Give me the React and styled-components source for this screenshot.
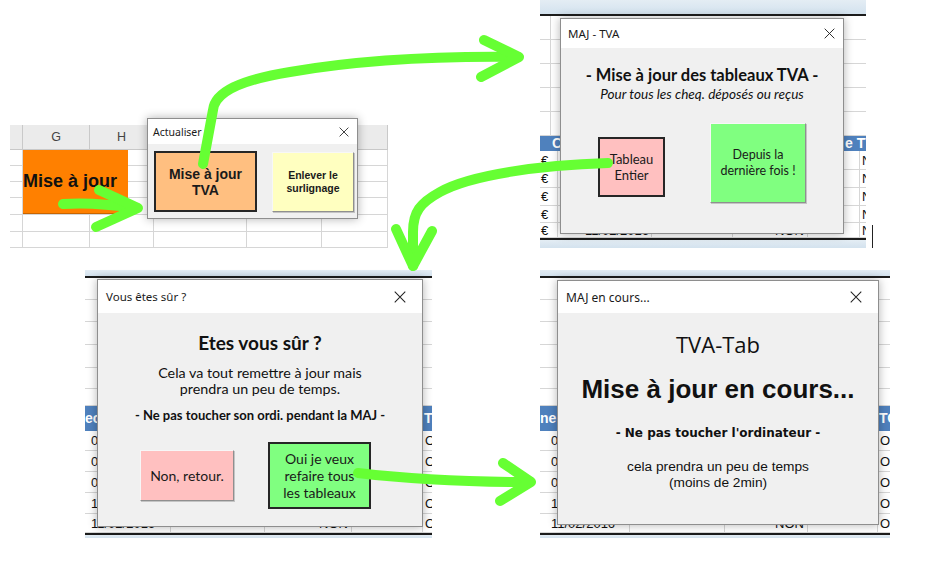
import React from 'react'
import styled, { createGlobalStyle, css } from 'styled-components'

const GlobalStyle = createGlobalStyle`
  html, body {
    margin: 0;
    padding: 0;
    background: #fff;
  }
  body {
    font-family: 'Liberation Sans', Arial, sans-serif;
  }
`

const ARROW = '#66ff33'

// Page
const Canvas = styled.div`
  position: relative;
  width: 934px;
  height: 580px;
  overflow: hidden;
  background: #fff;
`

// One screenshot placed on the canvas
const Scene = styled.div`
  position: absolute;
  left: ${(p) => p.$x}px;
  top: ${(p) => p.$y}px;
  width: ${(p) => p.$w}px;
  height: ${(p) => p.$h}px;
`

// Excel sheet behind the dialogs
const Sheet = styled.div`
  display: flex;
  flex-direction: column;
  width: 100%;
  height: 100%;
  overflow: hidden;
  background: #fff;
  font-family: 'Liberation Sans', Arial, sans-serif;
  font-size: 13px;
  color: #111;
`

const Strip = styled.div`
  flex: none;
  height: ${(p) => p.$h}px;
  background: linear-gradient(#e4edf4, #d3e2ee);
  box-sizing: border-box;
  ${(p) =>
    p.$edge === 'top'
      ? css`border-bottom: 2px solid #1c1c1c;`
      : css`border-top: 2px solid #1c1c1c;`}
`

const HeadBand = styled.div`
  flex: none;
  display: flex;
  height: 25px;
  background: #ebebeb;
  border-bottom: 1px solid #c8c8c8;
  box-sizing: border-box;
`

const ColHead = styled.div`
  flex: none;
  width: ${(p) => p.$w}px;
  display: flex;
  align-items: center;
  justify-content: center;
  border-right: 1px solid #c9c9c9;
  box-sizing: border-box;
  font-size: 12.5px;
  color: #444;
`

const Row = styled.div`
  flex: none;
  display: flex;
  height: ${(p) => p.$h}px;
  box-sizing: border-box;
  background: ${(p) => (p.$head ? '#4f81bd' : 'transparent')};
  color: ${(p) => (p.$head ? '#fff' : '#111')};
  font-weight: ${(p) => (p.$head ? 700 : 400)};
  font-size: ${(p) => (p.$head ? 14 : 13)}px;
  border-bottom: 1px solid ${(p) => (p.$head ? '#4f81bd' : '#d6d6d6')};
`

const Cell = styled.div`
  flex: none;
  width: ${(p) => p.$w}px;
  box-sizing: border-box;
  padding: 0 ${(p) => p.$pad ?? 3}px;
  display: flex;
  align-items: center;
  justify-content: ${(p) =>
    p.$align === 'right' ? 'flex-end' : p.$align === 'center' ? 'center' : 'flex-start'};
  border-right: 1px solid ${(p) => (p.$head ? 'transparent' : '#d6d6d6')};
  white-space: nowrap;
  overflow: hidden;
`

// Shape button drawn on the sheet (top-left screenshot)
const ShapeButton = styled.div`
  position: absolute;
  left: 13px;
  top: 25px;
  width: 105px;
  height: 64px;
  display: flex;
  align-items: center;
  background: #ff8000;
  border-bottom: 1px solid #c96500;
  box-sizing: border-box;
  font-family: 'Liberation Sans', Arial, sans-serif;
  font-weight: 700;
  font-size: 18px;
  color: #111;
  white-space: nowrap;
  overflow: hidden;
`

// Windows dialog
const Dialog = styled.div`
  position: absolute;
  left: ${(p) => p.$x}px;
  top: ${(p) => p.$y}px;
  width: ${(p) => p.$w}px;
  height: ${(p) => p.$h}px;
  z-index: 2;
  display: flex;
  flex-direction: column;
  box-sizing: border-box;
  background: #f0f0f0;
  border: 1px solid #8e8e8e;
  box-shadow: 0 0 9px rgba(0, 0, 0, 0.3);
`

const TitleBar = styled.div`
  flex: none;
  height: ${(p) => p.$h}px;
  display: flex;
  align-items: center;
  justify-content: space-between;
  padding: 0 ${(p) => p.$pr}px 0 ${(p) => p.$pl}px;
  background: #fff;
  font-family: 'Noto Sans', 'Open Sans', sans-serif;
  font-size: ${(p) => p.$size}px;
  color: #1a1a1a;
`

const Body = styled.div`
  flex: 1;
  display: flex;
  flex-direction: column;
  align-items: center;
  padding-top: ${(p) => p.$pt || 0}px;
  font-family: Lato, 'Open Sans', sans-serif;
  color: #111;
`

const Line = styled.div`
  font-family: ${(p) => p.$font || "Lato, 'Open Sans', sans-serif"};
  font-size: ${(p) => p.$size}px;
  font-weight: ${(p) => (p.$bold ? 700 : 400)};
  font-style: ${(p) => (p.$italic ? 'italic' : 'normal')};
  line-height: ${(p) => p.$lh}px;
  margin-top: ${(p) => p.$mt || 0}px;
  text-align: center;
  white-space: pre-line;
`

const ButtonRow = styled.div`
  align-self: stretch;
  display: flex;
  align-items: ${(p) => p.$align || 'center'};
  justify-content: ${(p) => p.$justify || 'center'};
  gap: ${(p) => p.$gap}px;
  margin-top: ${(p) => p.$mt || 0}px;
  padding-left: ${(p) => p.$pl || 0}px;
`

const XlButton = styled.div`
  flex: none;
  box-sizing: border-box;
  width: ${(p) => p.$w}px;
  height: ${(p) => p.$h}px;
  margin-top: ${(p) => p.$mt || 0}px;
  display: flex;
  align-items: center;
  justify-content: center;
  text-align: center;
  white-space: pre-line;
  background: ${(p) => p.$bg};
  font-family: ${(p) => p.$font || "Lato, 'Open Sans', sans-serif"};
  font-size: ${(p) => p.$size}px;
  font-weight: ${(p) => (p.$bold ? 700 : 400)};
  line-height: ${(p) => p.$lh}px;
  color: #1a1a1a;
  ${(p) =>
    p.$focus
      ? css`
          border: 2px solid #262626;
        `
      : css`
          border: 1px solid;
          border-color: #f7f7f7 #8f8f8f #8f8f8f #f7f7f7;
          box-shadow: 1px 1px 0 #c4c4c4;
        `}
`

const ArrowLayer = styled.svg`
  position: absolute;
  left: 0;
  top: 0;
  z-index: 5;
  pointer-events: none;
`

const CloseX = ({ size }) => (
  <svg width={size} height={size} viewBox="0 0 10 10">
    <path d="M0.6 0.6L9.4 9.4M9.4 0.6L0.6 9.4" stroke="#222" strokeWidth="0.85" fill="none" />
  </svg>
)

const SheetRow = ({ h, cells, head }) => (
  <Row $h={h} $head={head}>
    {cells.map((c, i) => (
      <Cell key={i} $w={c.w} $align={c.align} $pad={c.pad} $head={head}>
        {c.t}
      </Cell>
    ))}
  </Row>
)

// Data
const colsA = [13, 67, 64, 93, 75, 66]
const rowsA = [16, 16, 16, 17, 17, 16]

const dates = ['05/01/2016', '08/01/2016', '09/01/2016', '10/02/2016', '11/02/2016']
const heightsB = [19, 18, 18, 17, 15]

const whiteC = [22, 22, 23, 23, 21, 17]
const dataC = [20, 21, 21, 21, 19]

// only the last row peeks out below the dialogs
const rowB = (d, last) => [
  { w: 18, t: '€', pad: 1 },
  { w: 94, t: last ? d : '', align: 'right', pad: 2 },
  { w: 81 },
  { w: 75, t: last ? 'NON' : '', align: 'right' },
  { w: 52 },
  { w: 30, t: 'NON', pad: 2 },
]

const rowC = (d, last, pad, widths) => [
  { w: widths[0], t: d, pad },
  { w: widths[1] },
  { w: widths[2], t: last ? 'NON' : '', align: 'right' },
  { w: widths[3] },
  { w: 30, t: 'OUI', pad: 2 },
]

const SheetLower = ({ head, pad, widths }) => (
  <Sheet>
    <Strip $edge="top" $h={8} />
    {whiteC.map((h, i) => (
      <SheetRow key={'w' + i} h={h} cells={[{ w: 400 }]} />
    ))}
    <SheetRow
      head
      h={25}
      cells={[
        { w: widths[0] + widths[1] + widths[2] + widths[3], t: head, pad: 0 },
        { w: 30, t: 'TOTAL', pad: 1 },
      ]}
    />
    {dates.map((d, i) => (
      <SheetRow key={d} h={dataC[i]} cells={rowC(d, i === dates.length - 1, pad, widths)} />
    ))}
    <Strip $edge="bottom" $h={5} />
  </Sheet>
)

export default function App() {
  return (
    <>
      <GlobalStyle />
      <Canvas>
        {/* Top left: sheet with the update shape and the "Actualiser" form */}
        <Scene $x={10} $y={125} $w={378} $h={123}>
          <Sheet>
            <HeadBand>
              {colsA.map((w, i) => (
                <ColHead key={i} $w={w}>
                  {i === 1 ? 'G' : i === 2 ? 'H' : ''}
                </ColHead>
              ))}
            </HeadBand>
            {rowsA.map((h, i) => (
              <SheetRow key={i} h={h} cells={colsA.map((w) => ({ w }))} />
            ))}
          </Sheet>
          <ShapeButton>Mise à jour</ShapeButton>
          <Dialog $x={137} $y={-7} $w={211} $h={101}>
            <TitleBar $h={25} $pl={5} $pr={8} $size={10.5}>
              Actualiser
              <CloseX size={10} />
            </TitleBar>
            <Body>
              <ButtonRow $justify="flex-start" $pl={6} $gap={15} $mt={7}>
                <XlButton
                  $focus
                  $w={103}
                  $h={61}
                  $bg="#ffbf80"
                  $font="'Liberation Sans', Arial, sans-serif"
                  $bold
                  $size={14}
                  $lh={16}
                >
                  {'Mise à jour\nTVA'}
                </XlButton>
                <XlButton
                  $w={82}
                  $h={60}
                  $bg="#ffffc0"
                  $font="'Liberation Sans', Arial, sans-serif"
                  $bold
                  $size={10.5}
                  $lh={13}
                >
                  {'Enlever le\nsurlignage'}
                </XlButton>
              </ButtonRow>
            </Body>
          </Dialog>
        </Scene>

        {/* Top right: MAJ - TVA */}
        <Scene $x={540} $y={0} $w={326} $h={248}>
          <Sheet>
            <Strip $edge="top" $h={16} />
            {[24, 24, 24, 24, 24].map((h, i) => (
              <SheetRow key={i} h={h} cells={[{ w: 11 }, { w: 320 }]} />
            ))}
            <SheetRow
              head
              h={15}
              cells={[
                { w: 300, t: 'Chèque', pad: 12 },
                { w: 40, t: 'e TVA', pad: 5 },
              ]}
            />
            {dates.map((d, i) => (
              <SheetRow key={d} h={heightsB[i]} cells={rowB(d, i === dates.length - 1)} />
            ))}
            <Strip $edge="bottom" $h={10} />
          </Sheet>
          <Dialog $x={20} $y={18} $w={284} $h={216}>
            <TitleBar $h={29} $pl={7} $pr={8} $size={11.5}>
              MAJ - TVA
              <CloseX size={11} />
            </TitleBar>
            <Body $pt={17}>
              <Line $bold $size={16.5} $lh={20}>
                - Mise à jour des tableaux TVA -
              </Line>
              <Line $italic $size={13.6} $lh={18}>
                Pour tous les cheq. déposés ou reçus
              </Line>
              <ButtonRow $align="flex-start" $gap={45} $mt={20}>
                <XlButton $focus $mt={14} $w={67} $h={60} $bg="#ffc0c0" $size={13} $lh={16}>
                  {'Tableau\nEntier'}
                </XlButton>
                <XlButton $w={96} $h={80} $bg="#80ff80" $size={12.5} $lh={16}>
                  {'Depuis la\ndernière fois !'}
                </XlButton>
              </ButtonRow>
            </Body>
          </Dialog>
        </Scene>

        {/* Bottom left: Vous êtes sûr ? */}
        <Scene $x={85} $y={270} $w={347} $h={270}>
          <SheetLower head="ec" pad={6} widths={[86, 94, 87, 71]} />
          <Dialog $x={12} $y={9} $w={326} $h={248}>
            <TitleBar $h={33} $pl={8} $pr={16} $size={11.5}>
              Vous êtes sûr ?
              <CloseX size={12} />
            </TitleBar>
            <Body $pt={20}>
              <Line $bold $size={19} $lh={20}>
                Etes vous sûr ?
              </Line>
              <Line $size={14.3} $lh={16} $mt={12}>
                {'Cela va tout remettre à jour mais\nprendra un peu de temps.'}
              </Line>
              <Line $bold $size={13} $lh={16} $mt={10}>
                - Ne pas toucher son ordi. pendant la MAJ -
              </Line>
              <ButtonRow $justify="flex-start" $pl={42} $gap={34} $mt={19}>
                <XlButton $w={94} $h={51} $bg="#ffc0c0" $size={14} $lh={17}>
                  Non, retour.
                </XlButton>
                <XlButton $focus $w={103} $h={67} $bg="#80ff80" $size={14} $lh={17}>
                  {'Oui je veux\nrefaire tous\nles tableaux'}
                </XlButton>
              </ButtonRow>
            </Body>
          </Dialog>
        </Scene>

        {/* Bottom right: MAJ en cours... */}
        <Scene $x={540} $y={270} $w={350} $h={270}>
          <SheetLower head="ne" pad={11} widths={[90, 95, 83, 70]} />
          <Dialog $x={17} $y={10} $w={322} $h={245}>
            <TitleBar $h={32} $pl={8} $pr={16} $size={12}>
              MAJ en cours...
              <CloseX size={12} />
            </TitleBar>
            <Body $pt={17}>
              <Line $font="'Open Sans', 'Noto Sans', sans-serif" $size={22} $lh={28}>
                TVA-Tab
              </Line>
              <Line $font="'Liberation Sans', Arial, sans-serif" $bold $size={26} $lh={32} $mt={15}>
                Mise à jour en cours...
              </Line>
              <Line $font="'DejaVu Sans', Verdana, sans-serif" $bold $size={12} $lh={16} $mt={20}>
                - Ne pas toucher l'ordinateur -
              </Line>
              <Line $font="'Liberation Sans', Arial, sans-serif" $size={13.7} $lh={16} $mt={18}>
                {'cela prendra un peu de temps\n(moins de 2min)'}
              </Line>
            </Body>
          </Dialog>
        </Scene>

        {/* Hand-drawn green arrows */}
        <ArrowLayer width="934" height="580" viewBox="0 0 934 580">
          <line x1="872.5" y1="225" x2="872.5" y2="248" stroke="#222" strokeWidth="1" />
          <g
            fill="none"
            stroke={ARROW}
            strokeWidth="10"
            strokeLinecap="round"
            strokeLinejoin="round"
          >
            <path d="M63 204 C90 202 115 205 136 208" />
            <path d="M99 190 L138 208 L96 227" />

            <path d="M203 164 L213 110 C215 92 240 80 290 72 C360 60 440 56 518 57" />
            <path d="M484 40 L519 57 L481 77" />

            <path d="M608 163 C540 165 470 175 440 192 C420 203 413 212 413 232 L413 266" />
            <path d="M396 229 L413 266 L432 231" />

            <path d="M358 473 C400 478 460 482 528 482" />
            <path d="M503 463 L531 482 L500 501" />
          </g>
        </ArrowLayer>
      </Canvas>
    </>
  )
}
